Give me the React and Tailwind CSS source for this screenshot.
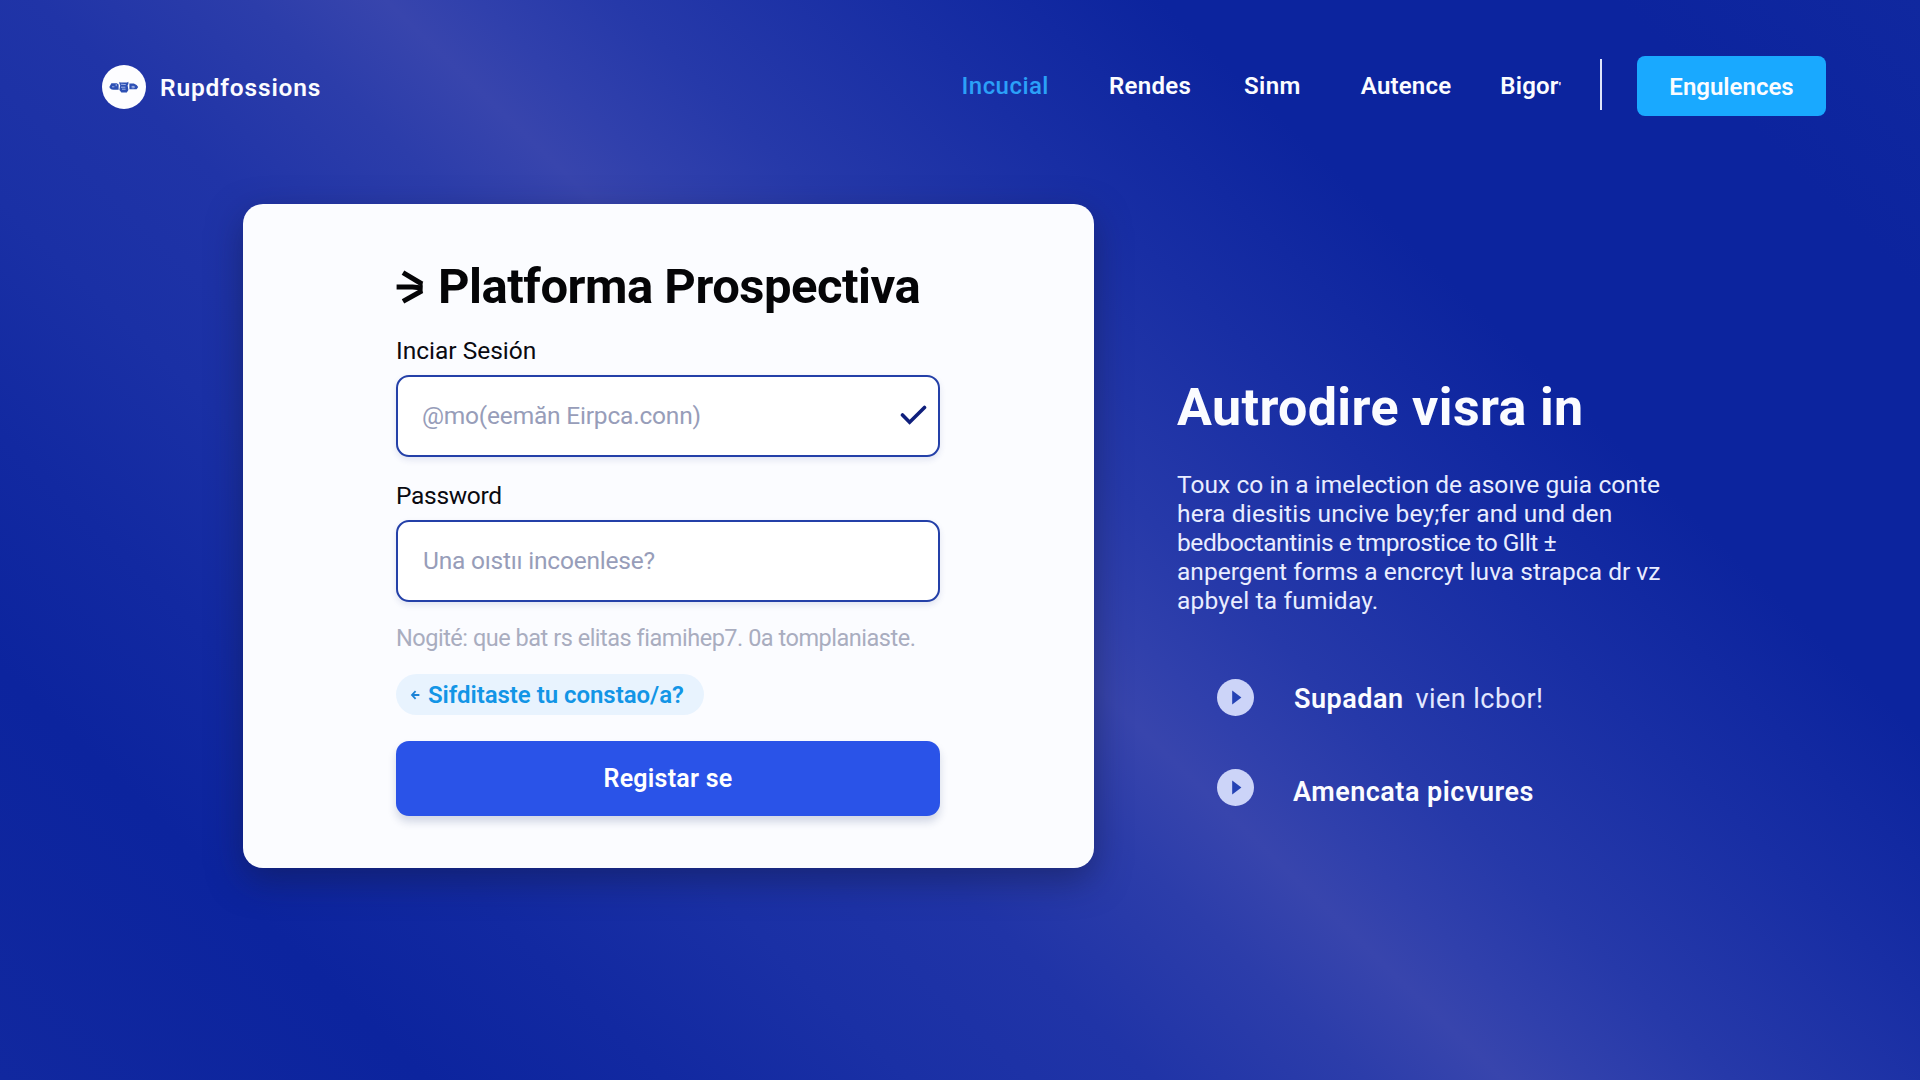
const navItems = [
  { label: "Rendes", cls: "ml-[60px] tracking-[0.3px]" },
  { label: "Sinm", cls: "ml-[53px] tracking-[0.4px]" },
  { label: "Autence", cls: "ml-[60px] tracking-[0.2px]" },
  { label: "Bigor", cls: "ml-[49px] tracking-[0.2px]" },
];

const paragraph = [
  { text: "Toux co in a imelection de asoıve guia conte", cls: "tracking-[0.06px]" },
  { text: "hera diesitis uncive bey;fer and und den", cls: "tracking-[0.2px]" },
  { text: "bedboctantinis e tmprostice to Gllt ±", cls: "tracking-[-0.42px]" },
  { text: "anpergent forms a encrcyt luva strapca dr vz", cls: "tracking-[0.01px]" },
  { text: "apbyel ta fumiday.", cls: "tracking-[0.2px]" },
];

function Logo() {
  return (
    <svg viewBox="0 0 44 44" className="mt-[2px] size-11 shrink-0">
      <circle cx="22" cy="22" r="22" fill="#fdfdff" />
      <g fill="#2d50b4">
        <path d="M7.6 21.4 9.4 18.2h5.4l1.8 1.4v5.2h-5l-2-.4-2-1.4z" />
        <path d="M17.4 16.8l1 .6h6.6l1.4-.6v2.2l-.8 1.2.8 4.8-1.6 2.6h-5.4l-2-2.6.8-4.8-.8-1.4z" />
        <path d="M27.4 18.4h4.4l2.8 1.6 1.6 2-1.6 2.2h-7.2z" />
      </g>
      <g fill="none" stroke="#bccaf2" strokeWidth="0.8">
        <path d="M10 21.8h2.4M14.2 19v2.2M18.8 19.2l5 .4M19 22.2h4.4M20 24.2h3.6M29.6 21.4h2.6v1.4h-2.6" />
      </g>
    </svg>
  );
}

function TitleMark() {
  return (
    <svg viewBox="0 0 28 34" className="h-[34px] w-7 shrink-0" fill="none" stroke="#050507" strokeWidth="5">
      <path d="M7 2.6 26 14" />
      <path d="M0.6 17h16l9.6 1" />
      <path d="M7 31.4 26 20.8" />
      <path d="M25.6 12.4v10" strokeWidth="2" />
    </svg>
  );
}

function PlayBullet() {
  return (
    <svg viewBox="0 0 37 37" className="size-[37px] shrink-0">
      <circle cx="18.5" cy="18.5" r="18.5" fill="#ccd4f8" />
      <path d="M15.2 11.4v14.2l9.2-7.1z" fill="#2442b4" />
    </svg>
  );
}

function Header() {
  return (
    <header className="flex h-[60px] items-center pr-[94px] pl-[102px] text-2xl font-semibold">
      <Logo />
      <span className="mt-1 ml-[14px] text-[24.5px] tracking-[0.85px]">Rupdfossions</span>
      <nav className="ml-auto flex items-center">
        <a className="font-medium tracking-[0.45px] text-[#2ba0f8]">Incucial</a>
        {navItems.map((n) => (
          <a key={n.label} className={n.cls}>
            {n.label}
            {n.label === "Bigor" && <span className="align-[2px] text-[13px]">'</span>}
          </a>
        ))}
      </nav>
      <div className="mb-[3px] ml-[39px] h-[51px] w-[2px] bg-[#dfe5fb]" />
      <button className="ml-[35px] h-[60px] w-[189px] rounded-[8px] bg-[#19a9ff] pt-px">Engulences</button>
    </header>
  );
}

function LoginCard() {
  return (
    <section className="h-[664px] w-[851px] shrink-0 rounded-[20px] bg-[#fbfcff] pt-[55px] pl-[153px] text-[24.5px] text-[#0a0a10] shadow-[0_12px_34px_rgba(20,25,70,0.5)]">
      <div className="w-[544px]">
        <h1 className="flex h-14 items-center text-[49px] font-bold tracking-[-0.5px] whitespace-nowrap text-[#050507]">
          <TitleMark />
          <span className="ml-[14px]">Platforma Prospectiva</span>
        </h1>
        <label className="mt-[22px] flex h-7 items-center">Inciar Sesión</label>
        <div className="mt-[10px] flex h-[82px] items-center justify-between rounded-[13px] border-2 border-[#2440a8] bg-white pr-[11px] pl-[24px] text-[#979db9] shadow-[0_3px_6px_rgba(40,60,140,0.12)]">
          <span className="tracking-[-0.2px]">@mo(eemăn Eirpca.conn)</span>
          <svg viewBox="0 0 27 20" className="mb-[3px] h-5 w-[27px]" fill="none" stroke="#0f1f7c" strokeWidth="3.6">
            <path d="M2.5 10 9.6 17.2 24.5 2.5" strokeLinecap="round" />
          </svg>
        </div>
        <label className="mt-[25px] flex h-7 items-center tracking-[-0.3px]">Password</label>
        <div className="mt-[10px] flex h-[82px] items-center rounded-[13px] border-2 border-[#2440a8] bg-white pl-[25px] tracking-[-0.22px] text-[#979db9] shadow-[0_3px_6px_rgba(40,60,140,0.12)]">
          Una oıstıı incoenlese?
        </div>
        <p className="mt-[23px] flex h-7 items-center text-[23.5px] tracking-[-0.48px] whitespace-nowrap text-[#a9adbf]">
          Nogité: que bat rs elitas fiamihep7. 0a tomplaniaste.
        </p>
        <div className="mt-[21px] flex h-[41px] w-[308px] items-center rounded-full bg-[#e8f3fe] pl-[14px] text-2xl font-semibold whitespace-nowrap text-[#1295e6]">
          <svg viewBox="0 0 10 10" className="mr-[8px] size-[10px]" fill="none" stroke="#1b83d6" strokeWidth="1.8">
            <path d="M5.6 1.2 2 5l3.6 3.8M2 5h7.4" />
          </svg>
          <span className="tracking-[-0.04px]">Sifditaste tu constao/a?</span>
        </div>
        <button className="mt-[26px] h-[75px] w-full rounded-[13px] bg-[#2a53e8] text-[25px] font-semibold tracking-[0.25px] text-white shadow-[0_6px_9px_rgba(30,50,110,0.18)]">
          Registar se
        </button>
      </div>
    </section>
  );
}

function Pitch() {
  return (
    <section className="ml-[83px] pt-[174px]">
      <h2 className="h-[60px] text-[52px] leading-[60px] font-bold tracking-[0.35px] whitespace-nowrap">Autrodire visra in</h2>
      <p className="mt-[33px] text-[24.5px] leading-[28.9px] whitespace-nowrap text-[#e9edff]">
        {paragraph.map((l) => (
          <span key={l.text} className={"block " + l.cls}>
            {l.text}
          </span>
        ))}
      </p>
      <ul className="mt-[63px] ml-10 text-[27px] leading-8">
        <li className="flex h-[37px] items-center">
          <PlayBullet />
          <span className="mt-1 ml-[40px] font-semibold tracking-[0.5px]">Supadan</span>
          <span className="mt-1 ml-[12px] tracking-[0.45px] text-[#e2e7ff]">vien lcbor!</span>
        </li>
        <li className="mt-[53px] flex h-[37px] items-center">
          <PlayBullet />
          <span className="mt-[9px] ml-[39px] font-semibold tracking-[0.5px]">Amencata picvures</span>
        </li>
      </ul>
    </section>
  );
}

export default function App() {
  return (
    <div className="h-[1080px] w-[1920px] overflow-hidden bg-[linear-gradient(44deg,#11289f_0%,#0c249e_14%,#1229a1_22%,#1a30a5_30%,#2034a7_38%,#2c3daa_45%,#3845ad_49.5%,#3040ac_52.5%,#2639a9_57%,#182ea4_66%,#0c249e_75%,#0c249e_90%,#10289f_100%)] pt-14 font-['Roboto',sans-serif] text-[#fbfcff]">
      <Header />
      <main className="mt-[88px] flex pl-[243px]">
        <LoginCard />
        <Pitch />
      </main>
    </div>
  );
}
